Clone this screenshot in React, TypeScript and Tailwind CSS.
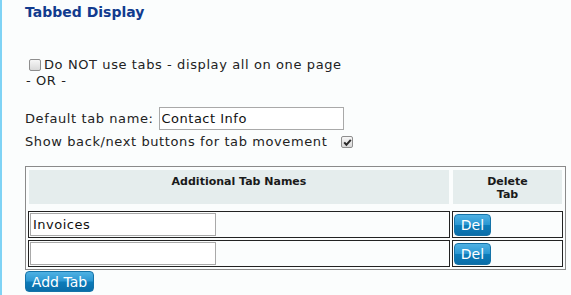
import React from "react";

function Box({ checked = false, className = "" }: { checked?: boolean; className?: string }) {
  return (
    <span
      className={`inline-flex h-[12px] w-[12px] shrink-0 items-center justify-center rounded-[2px] border border-[#8e8e8e] bg-[linear-gradient(to_bottom,#f6f6f6,#d9d9d9)] ${className}`}
    >
      {checked && (
        <svg width="9" height="9" viewBox="0 0 9 9">
          <path d="M1.2 4.4 L3.4 6.8 L7.8 1.8" fill="none" stroke="#2a2a2a" strokeWidth="2" />
        </svg>
      )}
    </span>
  );
}

function BlueButton({ children, className = "" }: { children: React.ReactNode; className?: string }) {
  return (
    <button
      className={`flex items-center justify-center rounded-[4px] border border-[#1573a8] bg-[linear-gradient(to_bottom,#4fb1e3_0%,#2b97d2_48%,#0d7cba_52%,#0a6da8_100%)] text-[14px] leading-none tracking-normal text-white ${className}`}
    >
      {children}
    </button>
  );
}

export default function App() {
  return (
    <div className="min-h-[295px] w-[571px] border-l-[2px] border-[#7fd3f5] bg-[#fbfdfd] pl-[23px] font-['DejaVu_Sans',Verdana,sans-serif] text-[13px] tracking-[0.6px] text-[#222]">
      <h2 className="pt-[3px] text-[14px] font-bold leading-[18px] tracking-normal text-[#113b8e]">Tabbed Display</h2>

      <div className="mt-[36px] flex items-center leading-[16px]">
        <Box className="ml-[4px] mr-[3px]" />
        <span>Do NOT use tabs - display all on one page</span>
      </div>
      <div className="ml-[1px] leading-[16px]">- OR -</div>

      <div className="mt-[18px] flex items-center leading-[16px]">
        <span>Default tab name:</span>
        <input
          readOnly
          value="Contact Info"
          className="ml-[5px] h-[23px] w-[185px] border border-[#a9a9a9] bg-white px-[2px] text-[13px] tracking-[0.5px] text-[#111] outline-none"
        />
      </div>
      <div className="mt-[4px] flex items-center leading-[16px]">
        <span>Show back/next buttons for tab movement</span>
        <Box checked className="ml-[14px]" />
      </div>

      <div className="mt-[16px] w-[541px] border border-[#8a8a8a] p-[2px]">
        <div className="grid grid-cols-[422px_111px] gap-x-[2px]">
          <div className="h-[36px] border border-transparent bg-[#e5eded] bg-clip-padding pt-[5px] text-center text-[11px] font-bold leading-[13px] tracking-normal text-[#1a1a1a]">
            Additional Tab Names
          </div>
          <div className="h-[36px] border border-transparent bg-[#e5eded] bg-clip-padding pt-[5px] text-center text-[11px] font-bold leading-[13px] tracking-normal text-[#1a1a1a]">
            Delete
            <br />
            Tab
          </div>
        </div>
        <div className="mt-[6px] grid grid-cols-[422px_111px] gap-x-[2px] gap-y-[2px]">
          <div className="flex h-[27px] items-center border border-[#222] pl-[1px]">
            <input
              readOnly
              value="Invoices"
              className="h-[23px] w-[186px] border border-[#a9a9a9] bg-white px-[2px] text-[13px] tracking-[0.5px] text-[#111] outline-none"
            />
          </div>
          <div className="flex h-[27px] items-center border border-[#222] pl-[1px]">
            <BlueButton className="h-[22px] w-[37px]">Del</BlueButton>
          </div>
          <div className="flex h-[27px] items-center border border-[#222] pl-[1px]">
            <input
              readOnly
              value=""
              className="h-[23px] w-[186px] border border-[#a9a9a9] bg-white px-[2px] text-[13px] tracking-[0.5px] text-[#111] outline-none"
            />
          </div>
          <div className="flex h-[27px] items-center border border-[#222] pl-[1px]">
            <BlueButton className="h-[22px] w-[37px]">Del</BlueButton>
          </div>
        </div>
      </div>
      <BlueButton className="mt-[1px] h-[21px] w-[69px]">Add Tab</BlueButton>
    </div>
  );
}
